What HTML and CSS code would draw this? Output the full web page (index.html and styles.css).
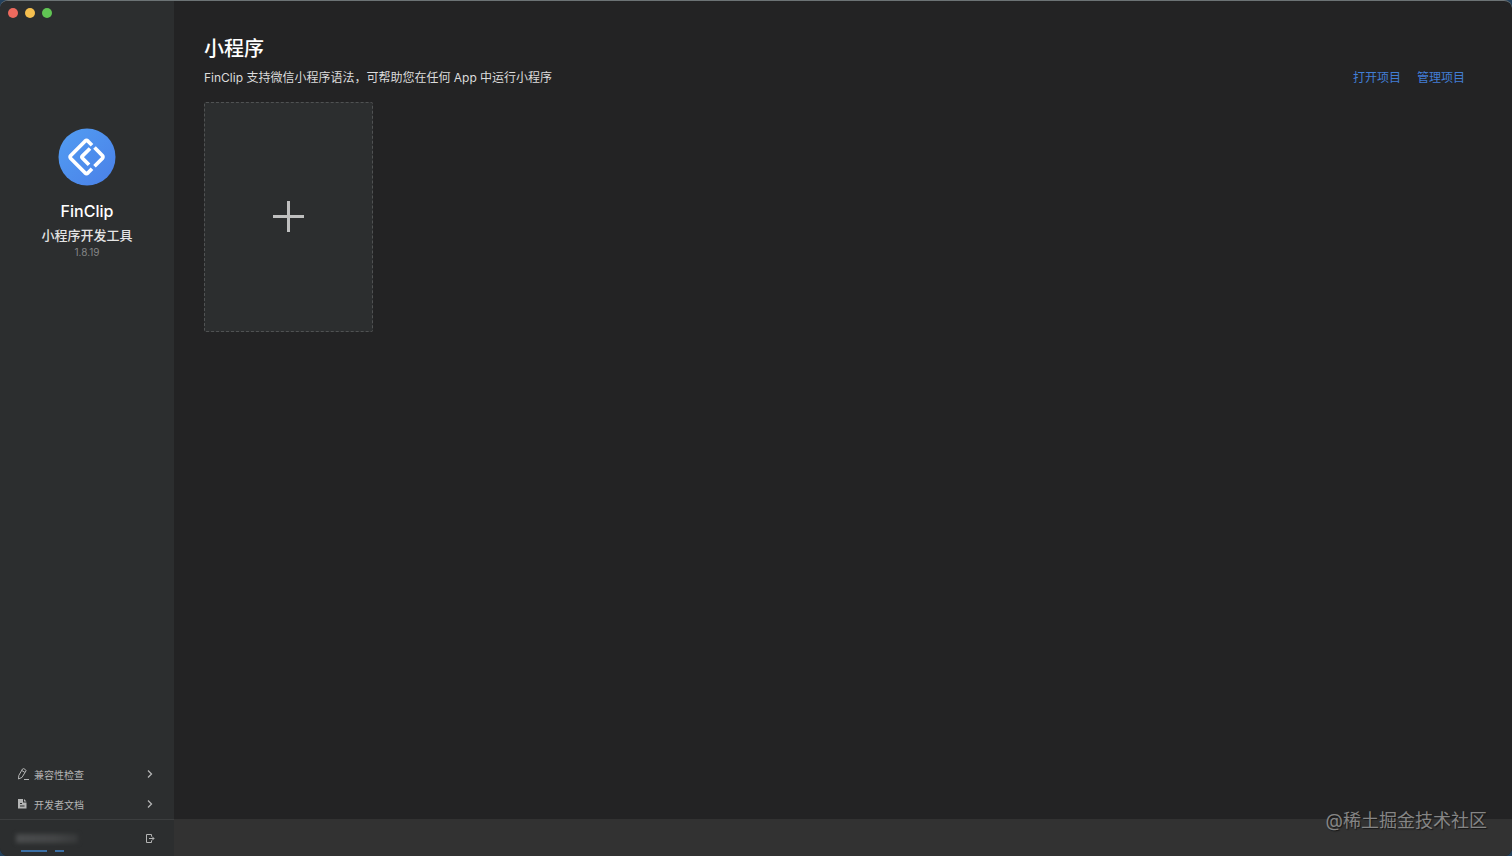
FILE: index.html
```html
<!DOCTYPE html>
<html lang="zh-CN">
<head>
    <meta charset="UTF-8">
    <meta name="viewport" content="width=device-width, initial-scale=1.0">
    <title>FinClip</title>
    <link rel="stylesheet" href="styles.css">
</head>
<body>
    <div class="window">
        <aside class="sidebar">
            <div class="lights">
                <button class="light red" aria-label="关闭"></button>
                <button class="light yellow" aria-label="最小化"></button>
                <button class="light green" aria-label="全屏"></button>
            </div>
            <div class="brand">
                <svg class="logo" viewBox="0 0 58 58" aria-hidden="true">
                    <defs>
                        <linearGradient id="disc" x1="0" y1="0" x2="1" y2="1">
                            <stop offset="0" stop-color="#529df2"/>
                            <stop offset="1" stop-color="#4a80e8"/>
                        </linearGradient>
                    </defs>
                    <circle cx="29" cy="29" r="28.5" fill="url(#disc)"/>
                    <g fill="none" stroke="#fff" stroke-width="3.7" stroke-linejoin="round">
                        <path d="M34 17.200L30 13.200Q28.500 11.800 27 13.200L12.800 27.500Q11.500 29 12.800 30.500L27 44.800Q28.500 46.200 30 44.800L34 40.800"/>
                        <path d="M32 20.500L24.500 27.800Q23.300 29 24.500 30.200L31 36.800"/>
                        <path d="M36.500 19.500L44.300 27.500Q45.500 29 44.300 30.500L36.500 38.300"/>
                    </g>
                </svg>
                <h1 class="name">FinClip</h1>
                <p class="product">小程序开发工具</p>
                <p class="version">1.8.19</p>
            </div>
            <nav class="menu">
                <a class="item" href="#">
                    <svg class="icon" viewBox="0 0 12 12" aria-hidden="true"><path d="M1.500 11L1.800 7.500L5.500 1Q6 .3 6.800 .7L8.600 1.800Q9.300 2.300 8.900 3L5 9.400L1.500 11M4.800 2.500L7.900 4.400M7 11.500H12" fill="none" stroke="currentColor"/></svg>
                    <span class="label">兼容性检查</span>
                    <svg class="arrow" viewBox="0 0 8 8" aria-hidden="true"><path d="M2 .5L5.500 4L2 7.500" fill="none" stroke="currentColor" stroke-width="1.3"/></svg>
                </a>
                <a class="item" href="#">
                    <svg class="icon" viewBox="0 0 12 12" aria-hidden="true"><path d="M1 1H6V4.500H9.500V10.500H1ZM7 1L9.500 3.500H7Z" fill="currentColor"/><path d="M3 5.500H5M3 8H7.500" stroke="#2c2e2f"/></svg>
                    <span class="label">开发者文档</span>
                    <svg class="arrow" viewBox="0 0 8 8" aria-hidden="true"><path d="M2 .5L5.500 4L2 7.500" fill="none" stroke="currentColor" stroke-width="1.3"/></svg>
                </a>
            </nav>
            <div class="account">
                <div class="user">
                    <span class="masked"></span>
                    <span class="strip"><i class="long"></i><i class="short"></i></span>
                </div>
                <button class="logout" aria-label="退出登录">
                    <svg viewBox="0 0 10 10" aria-hidden="true"><path d="M6.500 2.500V.5H1.500V8.500H6.500V6.500M4 4.500H9M7 2.500L9 4.500L7 6.500" fill="none" stroke="currentColor"/></svg>
                </button>
            </div>
        </aside>
        <main class="main">
            <section class="content">
                <h2 class="title">小程序</h2>
                <div class="row">
                    <p class="intro">FinClip 支持微信小程序语法，可帮助您在任何 App 中运行小程序</p>
                    <div class="links">
                        <a href="#">打开项目</a>
                        <a href="#">管理项目</a>
                    </div>
                </div>
                <button class="add" aria-label="新建小程序">
                    <svg viewBox="0 0 31 31" aria-hidden="true"><path d="M15.500 0V31M0 15.500H31" stroke="#bfbfbf" stroke-width="3"/></svg>
                </button>
            </section>
            <footer class="bar"></footer>
        </main>
        <span class="watermark">@稀土掘金技术社区</span>
    </div>
</body>
</html>
```

FILE: styles.css
```css
* {
    box-sizing: border-box;
}

html, body {
    margin: 0;
    height: 100%;
    background: #24415c;
    font-family: Inter, "Noto Sans CJK SC", sans-serif;
}

h1, h2, p {
    margin: 0;
}

a {
    text-decoration: none;
}

button {
    padding: 0;
    border: none;
    background: none;
}

svg {
    display: block;
}

.window {
    position: relative;
    display: flex;
    height: 100%;
    overflow: hidden;
    border-top: 1px solid #6c7375;
    border-radius: 8px;
    background: #232324;
}

.sidebar {
    display: flex;
    flex-direction: column;
    width: 174px;
    background: #2c2e2f;
}

.lights {
    display: flex;
    gap: 7px;
    padding: 7px 8px;
}

.light {
    width: 10px;
    height: 10px;
    border-radius: 50%;
}

.red {
    background: #ed6a5e;
}

.yellow {
    background: #f5bf4f;
}

.green {
    background: #61c554;
}

.brand {
    display: flex;
    flex: 1;
    flex-direction: column;
    align-items: center;
    padding-top: 103px;
}

.logo {
    width: 58px;
    height: 58px;
}

.name {
    margin-top: 12px;
    color: #fff;
    font-size: 16px;
    font-weight: 500;
    line-height: 26px;
}

.product {
    color: #e4e4e4;
    font-size: 13px;
    font-weight: 500;
    line-height: 22px;
}

.version {
    color: #858687;
    font-size: 10px;
    line-height: 12px;
}

.menu {
    color: #b4b5b5;
}

.item {
    display: flex;
    align-items: center;
    height: 30px;
    padding: 0 20px 0 17px;
    color: inherit;
    font-size: 10px;
}

.icon {
    width: 12px;
    height: 12px;
    margin-right: 5px;
}

.label {
    flex: 1;
}

.arrow {
    width: 8px;
    height: 8px;
}

.account {
    display: flex;
    justify-content: space-between;
    height: 37px;
    padding: 14px 19px 0 16px;
    border-top: 1px solid #3c3e3f;
}

.masked {
    display: block;
    width: 62px;
    height: 9px;
    background: linear-gradient(90deg, #4b4d4e, #444647 60%, #37393a);
    filter: blur(2px);
}

.strip {
    display: flex;
    gap: 8px;
    padding: 7px 5px 0;
}

.strip i {
    height: 2px;
    background: #3b6fa5;
}

.long {
    width: 26px;
}

.short {
    width: 9px;
}

.logout {
    width: 10px;
    height: 10px;
    color: #b4b5b5;
}

.main {
    display: flex;
    flex: 1;
    flex-direction: column;
}

.content {
    flex: 1;
    padding: 32px 47px 0 30px;
}

.title {
    color: #fff;
    font-size: 20px;
    font-weight: 500;
    line-height: 32px;
}

.row {
    display: flex;
    justify-content: space-between;
    margin-bottom: 11px;
    font-size: 12px;
    line-height: 26px;
}

.intro {
    color: #dcdcdc;
}

.links {
    display: flex;
    gap: 16px;
}

.links a {
    color: #427ed5;
}

.add {
    display: flex;
    align-items: center;
    justify-content: center;
    width: 169px;
    height: 230px;
    padding-bottom: 1px;
    border: 1px dashed #505253;
    border-radius: 2px;
    background: #2c2e2f;
}

.add svg {
    width: 31px;
    height: 31px;
}

.bar {
    height: 37px;
    background: #323232;
}

.watermark {
    position: absolute;
    right: 25px;
    bottom: 22px;
    color: #858585;
    font-size: 18px;
    line-height: 26px;
    text-shadow: 1px 1px 1px #171717;
}
```
